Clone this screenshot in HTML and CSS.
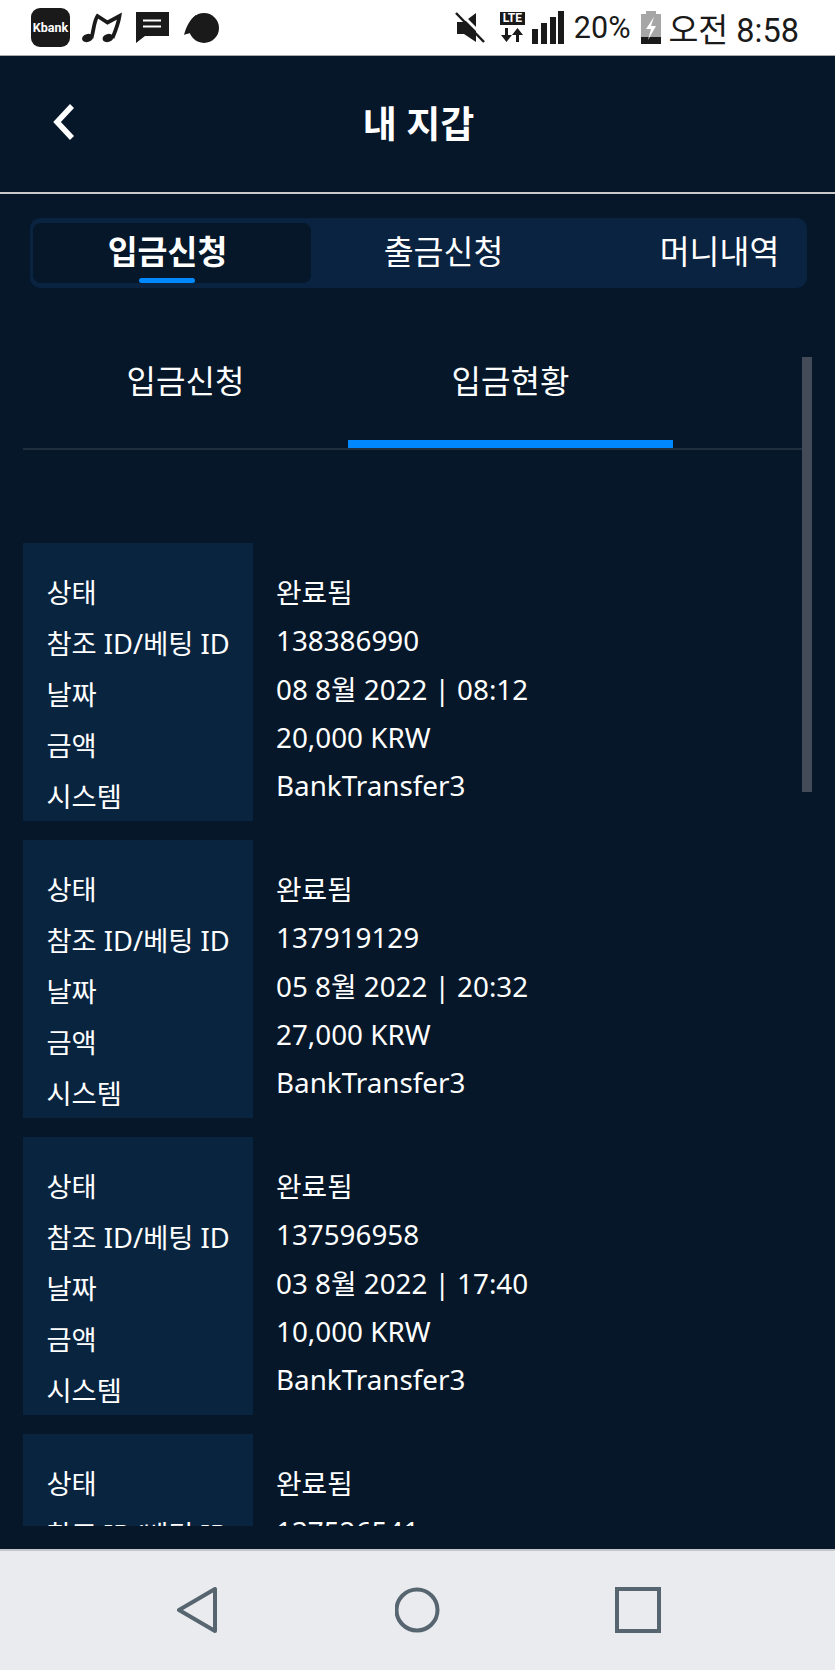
FILE: index.html
```html
<!DOCTYPE html>
<html lang="ko">
<head>
  <meta charset="UTF-8">
  <title>내 지갑</title>
  <link rel="stylesheet" href="styles.css">
</head>
<body>
  <!-- Status bar -->
  <div class="status-bar">
    <div class="status-left">
      <div class="app-icon">Kbank</div>
      <svg class="icon-music" width="40" height="32" viewBox="0 0 40 32">
        <ellipse cx="5.500" cy="26" rx="5.500" ry="4" transform="rotate(-15 5.500 26)" fill="#1a1a1a"/>
        <ellipse cx="26" cy="26" rx="5.500" ry="4" transform="rotate(-15 26 26)" fill="#1a1a1a"/>
        <path d="M9.500 26C12 17 12 9 15.500 4L25.500 10.500L37.500 4C36.500 11 33 20 30.500 26" fill="none" stroke="#1a1a1a" stroke-width="3.800"/>
      </svg>
      <svg class="icon-message" width="33" height="31" viewBox="0 0 33 31">
        <path d="M0 0H33V24H9L0 31Z" fill="#1a1a1a"/>
        <path d="M7 8.500H25M7 14.500H25" stroke="#fff" stroke-width="2"/>
      </svg>
      <svg class="icon-bubble" width="36" height="32" viewBox="0 0 36 32">
        <circle cx="20" cy="16" r="15" fill="#1a1a1a"/>
        <path d="M0 23C2 15 6 7 12 3L14 28C11 26 9 23 8 21C5 21 2 22 0 23Z" fill="#1a1a1a"/>
      </svg>
    </div>
    <div class="status-right">
      <svg class="icon-mute" width="30" height="32" viewBox="0 0 30 32">
        <path d="M2 10H9L21 1V30L9 22H2Z" fill="#1a1a1a"/>
        <path d="M3 -1L31 27" stroke="#fff" stroke-width="3"/>
        <path d="M1 1L29 30" stroke="#1a1a1a" stroke-width="2.500"/>
      </svg>
      <div class="lte-icon">
        <span class="lte-text">LTE</span>
        <svg width="25" height="15" viewBox="0 0 25 15">
          <path d="M5 0H8V7H12L6.500 14L1 7H5Z" fill="#1a1a1a"/>
          <path d="M16 14H19V7H23L17.500 0L12 7H16Z" fill="#1a1a1a"/>
        </svg>
      </div>
      <svg class="icon-signal" width="32" height="33" viewBox="0 0 32 33">
        <rect x="0" y="18" width="6" height="15" fill="#1a1a1a"/>
        <rect x="9" y="12" width="6" height="21" fill="#1a1a1a"/>
        <rect x="18" y="6" width="6" height="27" fill="#1a1a1a"/>
        <rect x="26" y="0" width="6" height="33" fill="#1a1a1a"/>
      </svg>
      <span class="status-pct">20%</span>
      <svg class="icon-battery" width="20" height="33" viewBox="0 0 20 33">
        <path d="M5 0H15V3H20V33H0V3H5Z" fill="#a6a6a6"/>
        <rect x="0" y="26" width="20" height="7" fill="#1a1a1a"/>
        <path d="M13 6L5 18H10L7 29L15 15H10Z" fill="#fff"/>
      </svg>
      <span class="status-time">오전 8:58</span>
    </div>
  </div>

  <!-- Header -->
  <div class="page-header">
    <svg class="back-icon" width="24" height="38" viewBox="0 0 24 38">
      <path d="M20 3L5 19L20 35" fill="none" stroke="#fff" stroke-width="5.500"/>
    </svg>
    <h1>내 지갑</h1>
  </div>

  <div class="main">
    <div class="wallet-tabs">
      <div class="wallet-tab active">입금신청</div>
      <div class="wallet-tab">출금신청</div>
      <div class="wallet-tab">머니내역</div>
    </div>

    <div class="sub-tabs">
      <div class="sub-tab">입금신청</div>
      <div class="sub-tab active">입금현황</div>
    </div>
    <div class="scroll-thumb"></div>

    <div class="record-list">
      <div class="record">
        <div class="record-labels">
          <div>상태</div>
          <div>참조 ID/베팅 ID</div>
          <div>날짜</div>
          <div>금액</div>
          <div>시스템</div>
        </div>
        <div class="record-values">
          <div>완료됨</div>
          <div>138386990</div>
          <div>08 8월 2022 | 08:12</div>
          <div>20,000 KRW</div>
          <div>BankTransfer3</div>
        </div>
      </div>
      <div class="record">
        <div class="record-labels">
          <div>상태</div>
          <div>참조 ID/베팅 ID</div>
          <div>날짜</div>
          <div>금액</div>
          <div>시스템</div>
        </div>
        <div class="record-values">
          <div>완료됨</div>
          <div>137919129</div>
          <div>05 8월 2022 | 20:32</div>
          <div>27,000 KRW</div>
          <div>BankTransfer3</div>
        </div>
      </div>
      <div class="record">
        <div class="record-labels">
          <div>상태</div>
          <div>참조 ID/베팅 ID</div>
          <div>날짜</div>
          <div>금액</div>
          <div>시스템</div>
        </div>
        <div class="record-values">
          <div>완료됨</div>
          <div>137596958</div>
          <div>03 8월 2022 | 17:40</div>
          <div>10,000 KRW</div>
          <div>BankTransfer3</div>
        </div>
      </div>
      <div class="record">
        <div class="record-labels">
          <div>상태</div>
          <div>참조 ID/베팅 ID</div>
          <div>날짜</div>
          <div>금액</div>
          <div>시스템</div>
        </div>
        <div class="record-values">
          <div>완료됨</div>
          <div>137526541</div>
          <div>03 8월 2022 | 11:02</div>
          <div>10,000 KRW</div>
          <div>BankTransfer3</div>
        </div>
      </div>
    </div>
  </div>

  <!-- Android nav bar -->
  <div class="nav-bar">
    <svg width="46" height="46" viewBox="0 0 46 46">
      <path d="M5 23L41 2V44Z" fill="none" stroke="#56656f" stroke-width="4" stroke-linejoin="round"/>
    </svg>
    <svg width="46" height="46" viewBox="0 0 46 46">
      <circle cx="22" cy="23" r="20.500" fill="none" stroke="#56656f" stroke-width="4"/>
    </svg>
    <svg width="46" height="46" viewBox="0 0 46 46">
      <rect x="2" y="2" width="42" height="42" fill="none" stroke="#56656f" stroke-width="4"/>
    </svg>
  </div>
</body>
</html>
```

FILE: styles.css
```css
* {
  box-sizing: border-box;
}

body {
  margin: 0;
  width: 835px;
  height: 1670px;
  overflow: hidden;
  display: flex;
  flex-direction: column;
  background: #051729;
  color: #fff;
  font-family: "Noto Sans", "Noto Sans CJK KR", sans-serif;
}

/* Status bar */
.status-bar {
  height: 56px;
  flex: none;
  background: #fff;
  border-bottom: 1px solid #aaa;
  display: flex;
  justify-content: space-between;
  align-items: center;
  padding: 0 36px 0 31px;
  color: #1a1a1a;
  font-family: Roboto, "Noto Sans CJK KR", sans-serif;
}

.status-left,
.status-right {
  display: flex;
  align-items: center;
}

.app-icon {
  width: 39px;
  height: 39px;
  border-radius: 9px;
  background: #1a1a1a;
  color: #fff;
  font-size: 12.500px;
  font-weight: 700;
  text-align: center;
  line-height: 39px;
}

.icon-music {
  margin-left: 12px;
}

.icon-message {
  margin-left: 14px;
}

.icon-bubble {
  margin-left: 15px;
}

.lte-icon {
  width: 25px;
  margin-left: 15px;
  display: flex;
  flex-direction: column;
  align-items: center;
  gap: 3px;
}

.lte-text {
  width: 25px;
  height: 13px;
  background: #1a1a1a;
  color: #fff;
  font-size: 12px;
  font-weight: 700;
  line-height: 13px;
  text-align: center;
}

.icon-signal {
  margin-left: 7px;
}

.status-pct {
  margin-left: 10px;
  font-size: 30.500px;
}

.icon-battery {
  margin-left: 11px;
}

.status-time {
  margin-left: 7px;
  font-size: 32.500px;
  white-space: nowrap;
}

/* Header */
.page-header {
  height: 138px;
  flex: none;
  position: relative;
  display: flex;
  align-items: center;
  justify-content: center;
  padding-bottom: 4px;
  border-bottom: 2px solid #c9c9c9;
}

.page-header h1 {
  margin: 0 0 0 2px;
  font-size: 37px;
  font-weight: 700;
}

.back-icon {
  position: absolute;
  left: 52px;
  top: 47px;
}

/* Main area */
.main {
  flex: 1;
  position: relative;
  min-height: 0;
  padding-top: 24px;
}

.wallet-tabs {
  width: 777px;
  height: 70px;
  margin-left: 30px;
  padding: 5px 3px;
  background: #0a2340;
  border-radius: 10px;
  display: flex;
  overflow: hidden;
}

.wallet-tab {
  flex: none;
  width: 276px;
  padding-right: 11px;
  font-size: 32.500px;
  line-height: 58px;
  text-align: center;
  position: relative;
}

.wallet-tab.active {
  width: 278px;
  padding-right: 9px;
  background: #051729;
  border-radius: 8px;
  font-weight: 700;
}

.wallet-tab.active::after {
  content: "";
  position: absolute;
  left: 106px;
  bottom: 0;
  width: 56px;
  height: 5px;
  border-radius: 3px;
  background: #0088ff;
}

.sub-tabs {
  width: 789px;
  height: 92px;
  margin: 70px 0 0 23px;
  border-bottom: 2px solid #1f2d3d;
  display: flex;
}

.sub-tab {
  width: 325px;
  height: 90px;
  font-size: 32px;
  line-height: 46px;
  text-align: center;
}

.sub-tab.active {
  border-bottom: 8px solid #0088ff;
}

.scroll-thumb {
  position: absolute;
  left: 802px;
  top: 163px;
  width: 10px;
  height: 435px;
  background: #424b57;
}

.record-list {
  height: 983px;
  margin: 93px 0 0 23px;
  overflow: hidden;
}

.record {
  display: flex;
  height: 278px;
  margin-bottom: 19px;
}

.record-labels {
  width: 230px;
  padding: 24px 0 0 23.500px;
  background: #09243f;
  font-size: 27.300px;
  line-height: 51px;
  white-space: nowrap;
}

.record-values {
  padding: 25px 0 0 23px;
  font-size: 27.800px;
  line-height: 48.300px;
  white-space: nowrap;
}

/* Nav bar */
.nav-bar {
  height: 121px;
  flex: none;
  padding-bottom: 1px;
  background: #e9ebef;
  border-top: 2px solid #c4c7cb;
  display: flex;
  align-items: center;
  justify-content: center;
  gap: 174.500px;
}
```
